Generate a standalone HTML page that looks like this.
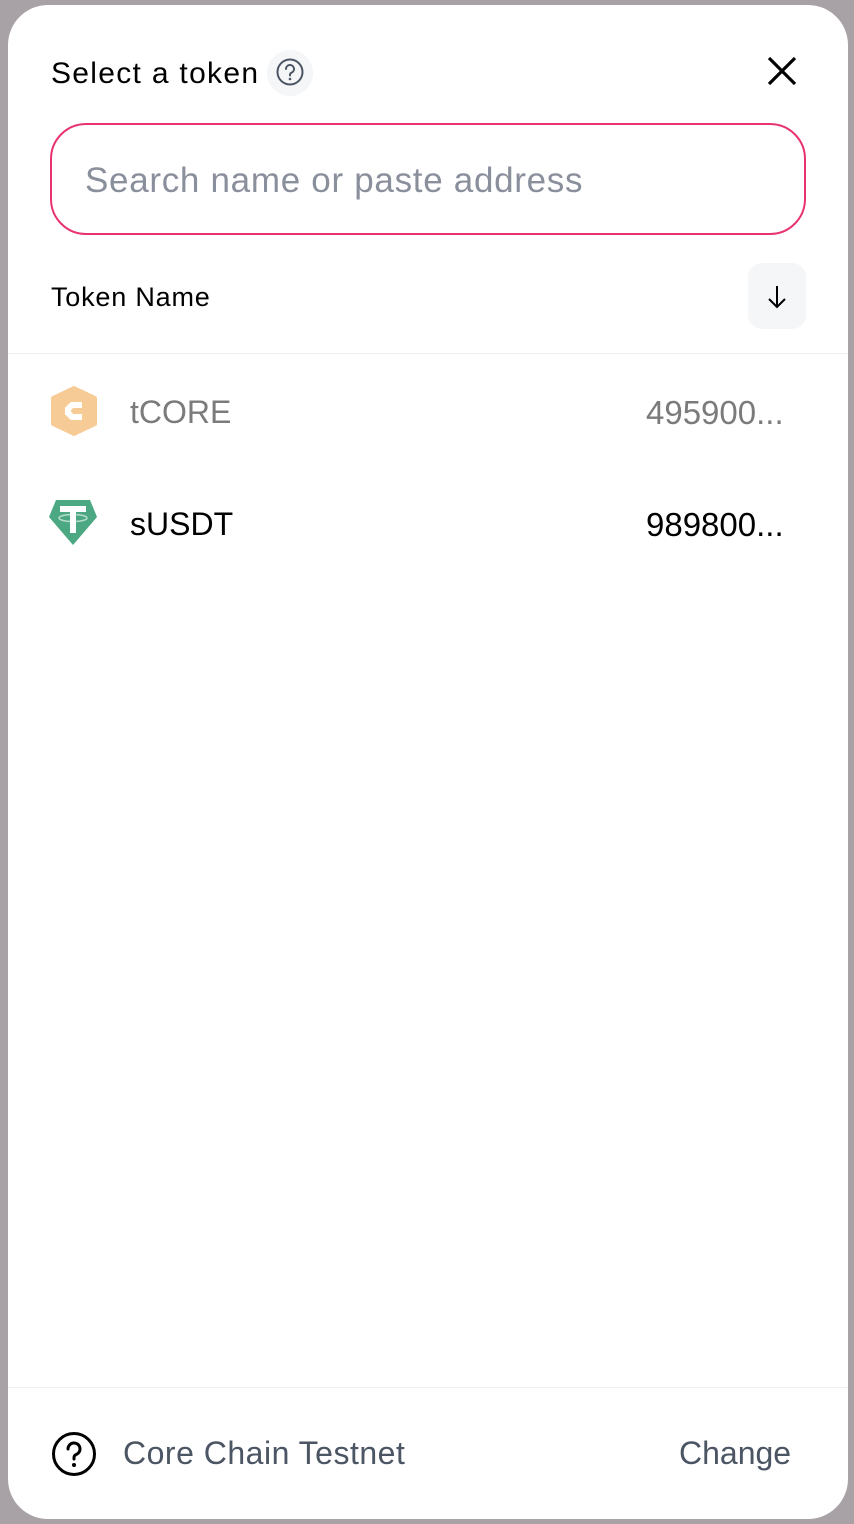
<!DOCTYPE html>
<html><head><style>
html,body{margin:0;padding:0;width:854px;height:1524px;background:#a8a1a6;overflow:hidden;font-family:"Liberation Sans",sans-serif}
.card{position:absolute;left:8px;top:5px;width:840px;height:1514px;background:#fff;border-radius:40px;overflow:hidden}
.t{position:absolute;white-space:nowrap}
</style></head><body>
<div class="card">
<div class="t" style="left:43px;top:52px;font-size:30px;color:#000;letter-spacing:1.3px">Select a token</div>
<div style="position:absolute;left:259px;top:45px;width:46px;height:46px;border-radius:23px;background:#f5f6f8"></div>
<svg style="position:absolute;left:267px;top:52px" width="30" height="30" viewBox="0 0 30 30"><circle cx="15" cy="15" r="12.5" fill="none" stroke="#4b5563" stroke-width="2"/><path d="M11 12a4 4 0 1 1 5.5 3.7c-1 .4-1.5 1.2-1.5 2.3v.5" fill="none" stroke="#4b5563" stroke-width="2" stroke-linecap="round"/><circle cx="15" cy="22" r="1.3" fill="#4b5563"/></svg>
<svg style="position:absolute;left:758px;top:50px" width="32" height="32" viewBox="0 0 32 32"><path d="M3 3L29 29M29 3L3 29" stroke="#000" stroke-width="3.2"/></svg>
<div style="position:absolute;left:42px;top:118px;width:752px;height:108px;border:2px solid #e8336f;border-radius:36px"></div>
<div class="t" style="left:77px;top:156px;font-size:35px;color:#8a8f9c;letter-spacing:0.7px">Search name or paste address</div>
<div class="t" style="left:43px;top:277px;font-size:27px;color:#000;letter-spacing:0.8px">Token Name</div>
<div style="position:absolute;left:740px;top:258px;width:58px;height:66px;border-radius:14px;background:#f5f6f8"></div>
<svg style="position:absolute;left:757px;top:279px" width="24" height="26" viewBox="0 0 24 26"><path d="M12 2V23M4 15l8 8 8-8" fill="none" stroke="#000" stroke-width="2"/></svg>
<div style="position:absolute;left:0;top:348px;width:840px;height:1px;background:#f0f0f2"></div>
<svg style="position:absolute;left:40px;top:381px" width="54" height="52" viewBox="0 0 54 52"><polygon points="26,2 47,12 47,38 26,48 5,38 5,12" fill="#f7cb96" stroke="#f7cb96" stroke-width="4" stroke-linejoin="round"/><path d="M34 19h-10l-4 4v4l4 4h10" fill="none" stroke="#fff" stroke-width="6"/></svg>
<div class="t" style="left:122px;top:389px;font-size:32px;color:#7b7b7b">tCORE</div>
<div class="t" style="left:638px;top:389px;font-size:33px;color:#7b7b7b">495900...</div>
<svg style="position:absolute;left:40px;top:492px" width="50" height="50" viewBox="0 0 50 50"><polygon points="8,3 42,3 49,20 25,48 1,20" fill="#4ba883"/><path d="M12 12h26M25 12v24" stroke="#fff" stroke-width="6"/><ellipse cx="25" cy="21" rx="14" ry="3.5" fill="none" stroke="#fff" stroke-width="1.5" opacity=".6"/></svg>
<div class="t" style="left:122px;top:501px;font-size:32px;color:#000">sUSDT</div>
<div class="t" style="left:638px;top:501px;font-size:33px;color:#000">989800...</div>
<div style="position:absolute;left:0;top:1382px;width:840px;height:1px;background:#f0f0f2"></div>
<svg style="position:absolute;left:43px;top:1426px" width="46" height="46" viewBox="0 0 46 46"><circle cx="23" cy="23" r="20.5" fill="none" stroke="#000" stroke-width="3"/><path d="M17 18a6 6 0 1 1 8 5.6c-1.3.6-2 1.6-2 3v1.4" fill="none" stroke="#000" stroke-width="3" stroke-linecap="round"/><circle cx="23" cy="34" r="2" fill="#000"/></svg>
<div class="t" style="left:115px;top:1430px;font-size:32px;color:#4b5563;letter-spacing:0.5px">Core Chain Testnet</div>
<div class="t" style="left:671px;top:1430px;font-size:32px;color:#4b5563">Change</div>
</div>
</body></html>
